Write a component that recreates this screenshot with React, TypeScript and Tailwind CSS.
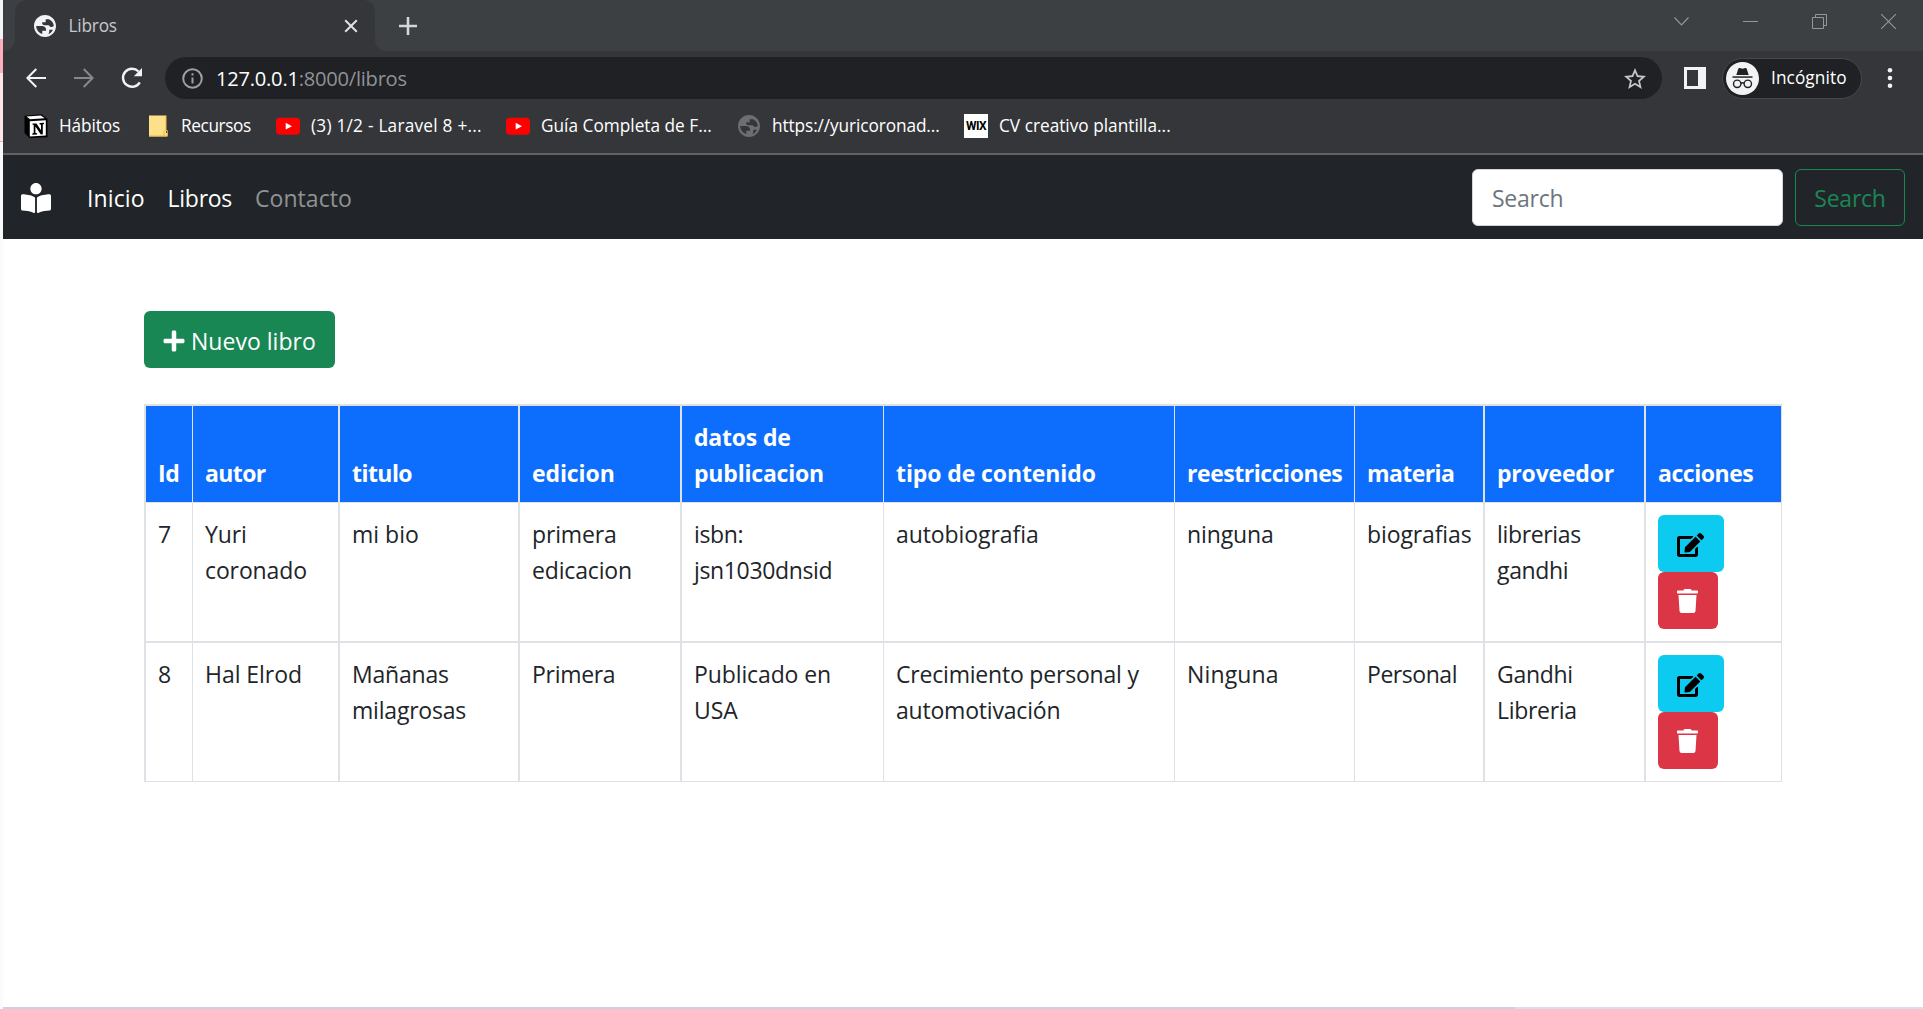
import React from 'react';
import { FaBookReader, FaEdit, FaPlus, FaTrash } from 'react-icons/fa';

function Globe({ className }: { className: string }) {
  return (
    <svg viewBox="2 2 20 20" className={className} fill="currentColor">
      <path d="M12 2C6.48 2 2 6.48 2 12s4.48 10 10 10 10-4.48 10-10S17.52 2 12 2zM4 12h4.4c3.4 0 4.9 1.5 4.6 4.4H9.5v2.9C6.300 18.200 4 15.400 4 12zm10.300 7.600c1.700-.7 1.600-2.400 1.600-4.300h3.400c-1 2-2.700 3.600-5 4.300zM20 12c-1.700 1.300-3.300 1.300-4.600-.7h-3.600c-1.900 0-2.400-1-2.400-2.700h3.200V5.800h3C18.200 7 20 9.300 20 12z" />
    </svg>
  );
}

function NotionIcon() {
  return (
    <svg viewBox="0 0 24 24" className="size-6">
      <path d="M.5 1.800 17.500.3 23.500 5v18.300L5.500 24 .5 19z" fill="#000" />
      <path d="M2.600 2.600 16.800 1.400l3.900 2.900L6 5.200z" fill="#fff" />
      <path d="M5.800 7.200 21.800 6.200v15.400l-16 1z" fill="#fff" />
      <path d="M8.500 9.400h4l4.500 6.800v-5.500l-1.500-.4V9l4.500-.2v1.300l-1.200.5v9.700l-2 .1-5.400-7.800v6.300l1.700.4V20.600l-4.800.2v-1.300l1.400-.5V11l-1.200-.4z" fill="#000" />
    </svg>
  );
}

function FolderIcon() {
  return (
    <svg viewBox="0 0 24 24" className="size-6">
      <path d="M3 1.500h17v17.500h1.500v3.500H3z" fill="#ffe08a" />
      <path d="M3 22h15v-4.500l2-2v-14M18 22h3.300v-5.500H20" fill="none" stroke="#e3bb45" />
    </svg>
  );
}

function YoutubeIcon() {
  return (
    <svg viewBox="0 0 24 24" className="size-6">
      <rect y="3.700" width="24" height="17" rx="4" fill="#f00" />
      <path d="M9.700 8.800 16 12.200 9.700 15.600z" fill="#fff" />
    </svg>
  );
}

function WixIcon() {
  return (
    <span className="flex size-6 items-center justify-center bg-white font-['Roboto',sans-serif] text-[12px] font-bold tracking-[-0.5px] text-black">
      WIX
    </span>
  );
}

function IncognitoIcon() {
  return (
    <svg viewBox="0 0 33 33" className="size-[33px]">
      <circle cx="16.500" cy="16.500" r="16.500" fill="#f1f3f4" />
      <path d="M12.300 6.700q.4-1 1.400-.7l2.800.7 2.800-.7q1-.3 1.400.7l2 6.300H10.300z" fill="#202124" />
      <path d="M6.500 14.300h20v1.500h-20z" fill="#202124" />
      <g fill="none" stroke="#202124" strokeWidth="1.400">
        <circle cx="11.200" cy="21.800" r="3.700" />
        <circle cx="21.800" cy="21.800" r="3.700" />
        <path d="M14.900 21.300q1.600-1 3.200 0" />
      </g>
    </svg>
  );
}

function TabStrip() {
  return (
    <div className="flex h-[51px] justify-between bg-[#3c4043]">
      <div className="flex">
        <div className="w-3 bg-[#35363a]">
          <div className="h-full rounded-br-[12px] bg-[#3c4043]" />
        </div>
        <div className="bg-[#3c4043]">
          <div className="flex h-full w-[360px] items-center rounded-t-[12px] bg-[#35363a] pr-[17px] pl-[19px]">
            <Globe className="size-[22px] text-[#f1f3f4]" />
            <span className="ml-[12.500px] flex-1 text-[17.250px] tracking-[-0.2px] text-[#c6c9cd]">Libros</span>
            <svg viewBox="0 0 14 14" className="size-[14px]" fill="none" stroke="#dfe1e5" strokeWidth="2">
              <path d="M1.200 1.200l11.600 11.600M12.800 1.200 1.200 12.800" />
            </svg>
          </div>
        </div>
        <div className="w-3 bg-[#35363a]">
          <div className="h-full rounded-bl-[12px] bg-[#3c4043]" />
        </div>
        <svg viewBox="0 0 18 18" className="mt-[17px] ml-3 size-[18px]" fill="none" stroke="#d5d7da" strokeWidth="2.600">
          <path d="M9 0v18M0 9h18" />
        </svg>
      </div>
      <div className="flex gap-[54px] pt-[14px] pr-[27px]">
        <svg viewBox="0 0 15 15" className="size-[15px]" fill="none" stroke="#94979a" strokeWidth="1.100">
          <path d="M.5 3.500 7.500 11l7-7.500" />
        </svg>
        <svg viewBox="0 0 15 15" className="size-[15px]" fill="none" stroke="#94979a">
          <path d="M0 7.500h15" />
        </svg>
        <svg viewBox="0 0 15 15" className="size-[15px]" fill="none" stroke="#94979a">
          <path d="M.5 3.500h11v11H.5zM3.500 3.500v-3h11v11h-3" />
        </svg>
        <svg viewBox="0 0 15 15" className="size-[15px]" fill="none" stroke="#94979a" strokeWidth="1.100">
          <path d="M0 0l15 15M15 0 0 15" />
        </svg>
      </div>
    </div>
  );
}

function Toolbar() {
  return (
    <div className="flex h-[54px] items-center bg-[#35363a] pl-[23px]">
      <svg viewBox="0 0 20 20" className="size-5" fill="none" stroke="#f1f3f4" strokeWidth="2">
        <path d="M20 10H1.500M10.300 1 1.400 10l8.900 9" />
      </svg>
      <svg viewBox="0 0 20 20" className="ml-7 size-5" fill="none" stroke="#86888a" strokeWidth="2">
        <path d="M0 10h18.500M9.700 1l8.900 9-8.900 9" />
      </svg>
      <svg viewBox="0 0 22 22" className="ml-[27px] size-[22px]">
        <path d="M18.800 15.300A9 9 0 1 1 17.500 4.500" fill="none" stroke="#f1f3f4" strokeWidth="2.400" />
        <path d="M21 1v8.200h-8.200z" fill="#f1f3f4" />
      </svg>
      <div className="ml-[22px] flex h-[42px] w-[1497px] items-center rounded-full bg-[#202124] pr-4 pl-[17px]">
        <svg viewBox="0 0 21 21" className="size-[21px]" fill="none" stroke="#9aa0a6" strokeWidth="2">
          <circle cx="10.500" cy="10.500" r="9.300" />
          <path d="M10.500 9.500v6M10.500 5.300v2.300" />
        </svg>
        <span className="ml-[13px] flex-1 text-[20.125px] tracking-[-0.24px] text-[#8f9296]">
          <span className="text-white">127.0.0.1</span>:8000/libros
        </span>
        <svg viewBox="2 2 20 19" className="h-[21px] w-[22px]" fill="#c3c6ca">
          <path d="M22 9.240l-7.190-.62L12 2 9.190 8.630 2 9.240l5.460 4.730L5.820 21 12 17.270 18.180 21l-1.630-7.030L22 9.240zM12 15.400l-3.760 2.270 1-4.280-3.320-2.880 4.380-.38L12 6.100l1.710 4.040 4.380.38-3.320 2.880 1 4.280L12 15.400z" />
        </svg>
      </div>
      <svg viewBox="0 0 22 22" className="ml-[22px] size-[22px]">
        <path d="M0 0h22v22H0z" fill="#f1f3f4" />
        <path d="M3 3h11v16H3z" fill="#35363a" />
      </svg>
      <div className="ml-[16px] flex h-[41px] w-[140px] items-center rounded-full border border-[#46484c] bg-[#202124] pl-[3px]">
        <IncognitoIcon />
        <span className="ml-[12px] text-[17.250px] tracking-[0.08px] text-white">Incógnito</span>
      </div>
      <svg viewBox="0 0 6 20" className="ml-[25px] h-5 w-1.5" fill="#f1f3f4">
        <circle cx="3" cy="2.300" r="2.300" />
        <circle cx="3" cy="10" r="2.300" />
        <circle cx="3" cy="17.700" r="2.300" />
      </svg>
    </div>
  );
}

const bookmarks = [
  { icon: <NotionIcon />, label: 'Hábitos', spacing: 'tracking-[-0.12px]' },
  { icon: <FolderIcon />, label: 'Recursos', spacing: 'tracking-[-0.4px]' },
  { icon: <YoutubeIcon />, label: '(3) 1/2 - Laravel 8 +...', spacing: 'tracking-[0.23px]' },
  { icon: <YoutubeIcon />, label: 'Guía Completa de F...', spacing: 'tracking-[0px]' },
  { icon: <Globe className="size-[22px] text-[#6b6e72]" />, label: 'https://yuricoronad...', spacing: 'tracking-[-0.1px]' },
  { icon: <WixIcon />, label: 'CV creativo plantilla...', spacing: 'tracking-[0px]' },
];

function Bookmarks() {
  return (
    <div className="grid h-[48px] grid-cols-[122px_130px_230px_231px_227px_auto] items-center bg-[#35363a] pb-[6px] pl-[21px] text-[17.250px] text-white">
      {bookmarks.map((b, i) => (
        <div key={i} className="flex items-center">
          <span className="flex w-6 justify-center">{b.icon}</span>
          <span className={`whitespace-nowrap pl-[11px] ${b.spacing}`}>{b.label}</span>
        </div>
      ))}
    </div>
  );
}

function Navbar() {
  return (
    <nav className="flex h-[84px] items-center bg-[#212529] pt-px pr-[18px] pl-[18px] text-[23px] text-white">
      <FaBookReader className="size-[30px]" />
      <a className="ml-[36px] pt-0.5 tracking-[0.1px]">Inicio</a>
      <a className="ml-[23px] pt-0.5 tracking-[-0.28px]">Libros</a>
      <a className="ml-[23px] flex-1 pt-0.5 tracking-[0.05px] text-[#909294]">Contacto</a>
      <input
        type="search"
        placeholder="Search"
        className="h-[57px] w-[311px] rounded-[6px] border border-[#ced4da] bg-white px-[19px] pt-px tracking-[-0.25px] text-[#212529] placeholder:text-[#6c757d]"
      />
      <button className="ml-3 h-[57px] w-[110px] rounded-[6px] border border-[#198754] pt-0.5 tracking-[-0.25px] text-[#198754]">
        Search
      </button>
    </nav>
  );
}

type Text = [string, string];

const columns: { title: Text; cell: string }[] = [
  { title: ['Id', 'tracking-[-0.3px]'], cell: 'w-[48px] border-l-2 pl-[12px]' },
  { title: ['autor', 'tracking-[-0.6px]'], cell: 'w-[146px] border-l pl-[12px]' },
  { title: ['titulo', 'tracking-[-0.55px]'], cell: 'w-[180px] border-l-2 pl-[12px]' },
  { title: ['edicion', 'tracking-[-0.1px]'], cell: 'w-[162px] border-l-2 pl-[12px]' },
  { title: ['datos de\npublicacion', 'tracking-[-0.2px]'], cell: 'w-[203px] border-l-2 pl-[12px]' },
  { title: ['tipo de contenido', 'tracking-[-0.1px]'], cell: 'w-[291px] border-l pl-[12px]' },
  { title: ['reestricciones', 'tracking-[-0.45px]'], cell: 'w-[180px] border-l pl-[12px]' },
  { title: ['materia', 'tracking-[-0.6px]'], cell: 'w-[129px] border-l pl-[12px]' },
  { title: ['proveedor', 'tracking-[-0.2px]'], cell: 'w-[161px] border-l-2 pl-[12px]' },
  { title: ['acciones', 'tracking-[-0.45px]'], cell: 'w-[138px] border-l-2 border-r pl-[12px]' },
];

const rows: Text[][] = [
  [
    ['7', ''],
    ['Yuri\ncoronado', 'tracking-[-0.12px]'],
    ['mi bio', 'tracking-[0px]'],
    ['primera\nedicacion', 'tracking-[-0.15px]'],
    ['isbn:\njsn1030dnsid', 'tracking-[-0.35px]'],
    ['autobiografia', 'tracking-[-0.08px]'],
    ['ninguna', 'tracking-[-0.12px]'],
    ['biografias', 'tracking-[-0.11px]'],
    ['librerias\ngandhi', 'tracking-[-0.35px]'],
  ],
  [
    ['8', ''],
    ['Hal Elrod', 'tracking-[-0.05px]'],
    ['Mañanas\nmilagrosas', 'tracking-[-0.2px]'],
    ['Primera', 'tracking-[-0.3px]'],
    ['Publicado en\nUSA', 'tracking-[-0.11px]'],
    ['Crecimiento personal y\nautomotivación', 'tracking-[-0.2px]'],
    ['Ninguna', 'tracking-[0.15px]'],
    ['Personal', 'tracking-[-0.45px]'],
    ['Gandhi\nLibreria', 'tracking-[-0.3px]'],
  ],
];

function BooksTable() {
  return (
    <table className="mt-9 w-[1638px] table-fixed border-separate border-spacing-0 text-left text-[23px] leading-9 text-[#212529]">
      <thead>
        <tr>
          {columns.map((c) => (
            <th
              key={c.title[0]}
              className={`border-t-2 border-b border-[#dee2e6] bg-[#0d6efd] bg-clip-padding pt-[13px] pb-[11px] align-bottom font-bold whitespace-pre text-white ${c.cell} ${c.title[1]}`}
            >
              {c.title[0]}
            </th>
          ))}
        </tr>
      </thead>
      <tbody>
        {rows.map((row, r) => (
          <tr key={r}>
            {row.map(([text, spacing], i) => (
              <td
                key={i}
                className={`border-[#dee2e6] pt-[13px] align-top whitespace-pre ${r === 0 ? 'border-b-2' : 'border-b'} ${columns[i].cell} ${spacing}`}
              >
                {text}
              </td>
            ))}
            <td className={`border-[#dee2e6] py-3 align-top ${r === 0 ? 'border-b-2' : 'border-b'} ${columns[9].cell}`}>
              <div className="flex flex-col items-start">
                <button className="flex h-[57px] w-[66px] items-center justify-center rounded-[6px] bg-[#0dcaf0] pt-0.5 pr-px text-black">
                  <FaEdit className="h-6 w-[27px]" />
                </button>
                <button className="flex h-[57px] w-[60px] items-center justify-center rounded-[6px] bg-[#dc3545] pt-px pr-px text-white">
                  <FaTrash className="h-6 w-[21px]" />
                </button>
              </div>
            </td>
          </tr>
        ))}
      </tbody>
    </table>
  );
}

export default function App() {
  return (
    <div className="flex h-[1009px] w-[1923px] overflow-hidden bg-white font-['Open_Sans',sans-serif]">
      <aside className="flex w-[3px] flex-col bg-[#fafafa]">
        <div className="h-[39px] bg-[#f5f5f5]" />
        <div className="h-[34px] bg-[#ffb0bd]" />
        <div className="h-[69px] border-b border-[#d9b8be] bg-[#ffe6ea]" />
      </aside>
      <div className="flex flex-1 flex-col">
        <TabStrip />
        <Toolbar />
        <Bookmarks />
        <div className="h-[2px] bg-[#5f6368]" />
        <Navbar />
        <main className="flex-1 pt-[72px] pl-[141px]">
          <button className="flex h-[57px] w-[191px] items-center rounded-[6px] bg-[#198754] pl-[19px] text-[23px] tracking-[0.02px] text-white">
            <FaPlus className="mt-0.5 h-6 w-[22px]" />
            <span className="ml-[6px] pt-1">Nuevo libro</span>
          </button>
          <BooksTable />
        </main>
        <div className="flex h-[2px]">
          <div className="w-[1512px] bg-[#c9d1e4]" />
          <div className="flex-1 bg-[#d5dfef]" />
        </div>
      </div>
    </div>
  );
}
